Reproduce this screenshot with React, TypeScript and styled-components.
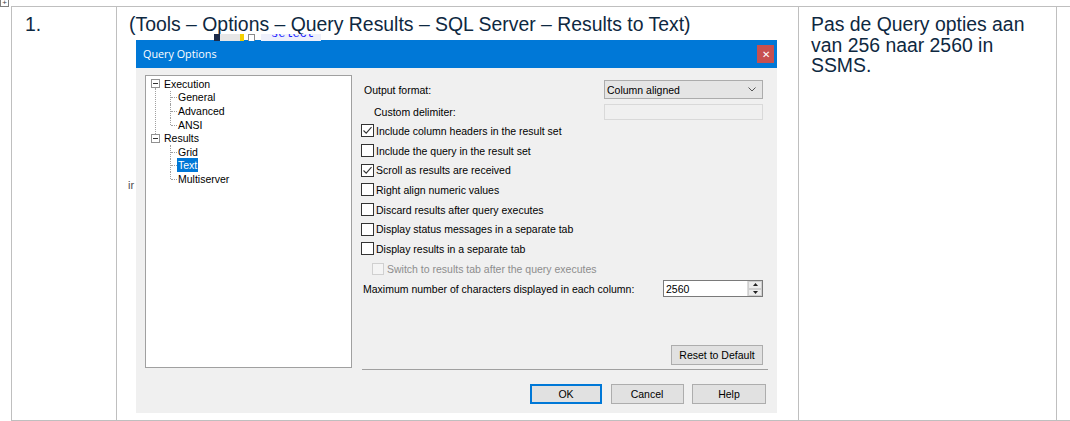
import React from 'react';
import styled, { createGlobalStyle } from 'styled-components';

const GlobalStyle = createGlobalStyle`
  html, body { margin: 0; padding: 0; background: #ffffff; }
  body { font-family: "Liberation Sans", Arial, sans-serif; }
  * { box-sizing: border-box; }
`;

const Page = styled.div`
  position: relative;
  width: 1070px;
  height: 421px;
  padding: 6px 0 0 11px;
  overflow: hidden;
`;

const MoveHandle = styled.div`
  position: absolute;
  left: 0;
  top: 0;
  width: 9px;
  height: 7px;
  border: 1px solid #7f7f7f;
  border-top: none;
  font-size: 8px;
  line-height: 5px;
  text-align: center;
  color: #404040;
`;

const Table = styled.div`
  display: grid;
  grid-template-columns: 105px 682px 259px;
  height: 415px;
  border-top: 1px solid #bfbfbf;
  border-bottom: 1px solid #bfbfbf;
`;

const Cell = styled.div<{ $last?: boolean }>`
  position: relative;
  border-left: 1px solid #bfbfbf;
  border-right: ${(p) => (p.$last ? '1px solid #bfbfbf' : 'none')};
  padding: 7px 12px 0 13px;
  color: #0e2841;
  font-size: 19.4px;
  line-height: 20.6px;
`;

const WideCell = styled(Cell)`
  padding: 7px 0 0 12px;
`;

const NoteCell = styled(Cell)`
  padding: 7px 18px 0 12px;
`;

const TitleLine = styled.div`
  line-height: 20px;
  white-space: nowrap;
`;

/* strip of the screenshot that peeks out above the dialog */
const CodeStrip = styled.div`
  position: absolute;
  left: 97px;
  top: 27px;
  height: 7px;
  display: flex;
  align-items: stretch;
  overflow: hidden;
`;

const StripPiece = styled.span<{ $w: number; $bg: string }>`
  display: block;
  width: ${(p) => p.$w}px;
  background: ${(p) => p.$bg};
`;

const StripBox = styled.span`
  display: block;
  width: 7px;
  margin: 0 2px 0 4px;
  border: 1px solid #8a8a8a;
  border-bottom: none;
  background: #fff;
`;

const StripCode = styled.span`
  display: block;
  width: 60px;
  margin-left: 4px;
  background: #eef0fb;
  color: #1a1aff;
  font-family: "Liberation Mono", monospace;
  font-size: 12px;
  line-height: 0px;
  padding-left: 10px;
`;

const GhostText = styled.span`
  position: absolute;
  left: 11px;
  top: 172px;
  font-size: 11px;
  line-height: 12px;
  color: #505050;
`;

const Dialog = styled.div`
  margin: 6px 0 0 7px;
  width: 641px;
  background: #f0f0f0;
  font-family: "Liberation Sans", Arial, sans-serif;
  font-size: 10.5px;
  line-height: 12px;
  color: #000;
`;

const TitleBar = styled.div`
  height: 28px;
  background: #0078d7;
  display: flex;
  align-items: center;
  justify-content: space-between;
  padding: 0 3px 0 7px;
  color: #ffffff;
  font-family: "Open Sans", "Noto Sans", sans-serif;
  font-size: 10.8px;
`;

const CloseButton = styled.div`
  width: 17px;
  height: 18px;
  background: #c75050;
  color: #fff;
  font-size: 10px;
  display: flex;
  align-items: center;
  justify-content: center;
`;

const Body = styled.div`
  padding: 7px 9px 9px 9px;
`;

const Main = styled.div`
  display: grid;
  grid-template-columns: 207px 408px;
  column-gap: 8px;
`;

const TreePanel = styled.div`
  height: 293px;
  background: #ffffff;
  border: 1px solid #a0a0a0;
  padding: 1px 0 0 0;
`;

const RootNode = styled.div<{ $hasNext?: boolean }>`
  position: relative;
  &::before {
    content: '';
    display: ${(p) => (p.$hasNext ? 'block' : 'none')};
    position: absolute;
    left: 9px;
    top: 11px;
    height: 100%;
    border-left: 1px dotted #a0a0a0;
  }
`;

const NodeRow = styled.div`
  height: 13.6px;
  display: flex;
  align-items: center;
  padding-left: 5px;
  white-space: nowrap;
`;

const Expander = styled.span`
  position: relative;
  width: 9px;
  height: 9px;
  margin-right: 3px;
  border: 1px solid #919191;
  background: #fff;
  z-index: 1;
  &::after {
    content: '';
    position: absolute;
    left: 1px;
    top: 3px;
    width: 5px;
    border-top: 1px solid #333;
  }
`;

const ChildRow = styled.div<{ $last?: boolean }>`
  position: relative;
  height: 13.6px;
  display: flex;
  align-items: center;
  padding-left: 31px;
  white-space: nowrap;
  &::before {
    content: '';
    position: absolute;
    left: 24px;
    top: 0;
    height: ${(p) => (p.$last ? '50%' : '100%')};
    border-left: 1px dotted #a0a0a0;
  }
  &::after {
    content: '';
    position: absolute;
    left: 25px;
    top: 50%;
    width: 6px;
    border-top: 1px dotted #a0a0a0;
  }
`;

const NodeLabel = styled.span<{ $selected?: boolean }>`
  padding: 1px 1px;
  background: ${(p) => (p.$selected ? '#0078d7' : 'transparent')};
  color: ${(p) => (p.$selected ? '#ffffff' : '#000000')};
`;

const Form = styled.div`
  height: 295px;
  display: flex;
  flex-direction: column;
`;

const FieldRow = styled.div<{ $h: number; $top: number; $indent: number }>`
  height: ${(p) => p.$h}px;
  margin-top: ${(p) => p.$top}px;
  padding: 0 5px 0 ${(p) => p.$indent}px;
  display: flex;
  align-items: center;
  justify-content: space-between;
  white-space: nowrap;
`;

const Select = styled.div`
  width: 159px;
  height: 19px;
  background: #e5e5e5;
  border: 1px solid #acacac;
  display: flex;
  align-items: center;
  justify-content: space-between;
  padding: 0 6px 0 2px;
`;

const TextInput = styled.div<{ $disabled?: boolean }>`
  width: ${(p) => (p.$disabled ? 159 : 100)}px;
  height: ${(p) => (p.$disabled ? 16 : 17)}px;
  background: ${(p) => (p.$disabled ? '#f0f0f0' : '#ffffff')};
  border: 1px solid ${(p) => (p.$disabled ? '#d9d9d9' : '#7a7a7a')};
  display: flex;
  align-items: center;
  justify-content: space-between;
  padding-left: 2px;
`;

const Spinner = styled.div`
  width: 15px;
  height: 15px;
  display: flex;
  flex-direction: column;
  border-left: 1px solid #dcdcdc;
`;

const SpinHalf = styled.div`
  flex: 1;
  display: flex;
  align-items: center;
  justify-content: center;
  background: #ececec;
  border: 1px solid #cfcfcf;
`;

const CheckList = styled.div`
  margin-top: 1px;
`;

const CheckRow = styled.div<{ $indent?: number; $disabled?: boolean }>`
  height: 19.7px;
  display: flex;
  align-items: center;
  padding-left: ${(p) => p.$indent ?? 1}px;
  color: ${(p) => (p.$disabled ? '#8d8d8d' : '#000')};
  white-space: nowrap;
`;

const Box = styled.span<{ $disabled?: boolean }>`
  width: ${(p) => (p.$disabled ? 12 : 13)}px;
  height: ${(p) => (p.$disabled ? 12 : 13)}px;
  margin-right: ${(p) => (p.$disabled ? 3 : 2)}px;
  background: ${(p) => (p.$disabled ? '#f4f4f4' : '#ffffff')};
  border: 1px solid ${(p) => (p.$disabled ? '#d0d0d0' : '#333333')};
  display: flex;
  align-items: center;
  justify-content: center;
`;

const Spacer = styled.div`
  flex: 1;
`;

const Button = styled.div<{ $w: number; $default?: boolean }>`
  width: ${(p) => p.$w}px;
  height: 20px;
  background: #e1e1e1;
  border: 1px solid ${(p) => (p.$default ? '#0078d7' : '#adadad')};
  box-shadow: ${(p) => (p.$default ? 'inset 0 0 0 1px #0078d7' : 'none')};
  display: flex;
  align-items: center;
  justify-content: center;
`;

const ResetRow = styled.div`
  display: flex;
  justify-content: flex-end;
  padding-right: 5px;
`;

const Separator = styled.div`
  margin: 4px 0 0 2px;
  border-top: 1px solid #a0a0a0;
  height: 1px;
`;

const ButtonBar = styled.div`
  margin-top: 14px;
  padding-right: 2px;
  display: flex;
  justify-content: flex-end;
  gap: 8.5px;
`;

const Check = ({ checked }: { checked?: boolean }) => (
  <Box>
    {checked && (
      <svg width="11" height="11" viewBox="0 0 11 11">
        <path d="M1.5 5.5 L4.2 8.2 L9.5 2.2" fill="none" stroke="#333" strokeWidth="1.1" />
      </svg>
    )}
  </Box>
);

const options: { label: string; checked?: boolean }[] = [
  { label: 'Include column headers in the result set', checked: true },
  { label: 'Include the query in the result set' },
  { label: 'Scroll as results are received', checked: true },
  { label: 'Right align numeric values' },
  { label: 'Discard results after query executes' },
  { label: 'Display status messages in a separate tab' },
  { label: 'Display results in a separate tab' },
];

export default function App() {
  return (
    <>
      <GlobalStyle />
      <Page>
        <MoveHandle>+</MoveHandle>
        <Table>
          <Cell>1.</Cell>
          <WideCell>
            <TitleLine>(Tools – Options – Query Results – SQL Server – Results to Text)</TitleLine>
            <CodeStrip>
              <StripPiece $w={6} $bg="#1c2a48" />
              <StripPiece $w={20} $bg="#e6e6e6" />
              <StripPiece $w={4} $bg="#f5d000" />
              <StripBox />
              <StripCode>select</StripCode>
            </CodeStrip>
            <GhostText>ir</GhostText>
            <Dialog>
              <TitleBar>
                <span>Query Options</span>
                <CloseButton>✕</CloseButton>
              </TitleBar>
              <Body>
                <Main>
                  <TreePanel>
                    <RootNode $hasNext>
                      <NodeRow>
                        <Expander />
                        <NodeLabel>Execution</NodeLabel>
                      </NodeRow>
                      <ChildRow><NodeLabel>General</NodeLabel></ChildRow>
                      <ChildRow><NodeLabel>Advanced</NodeLabel></ChildRow>
                      <ChildRow $last><NodeLabel>ANSI</NodeLabel></ChildRow>
                    </RootNode>
                    <RootNode>
                      <NodeRow>
                        <Expander />
                        <NodeLabel>Results</NodeLabel>
                      </NodeRow>
                      <ChildRow><NodeLabel>Grid</NodeLabel></ChildRow>
                      <ChildRow><NodeLabel $selected>Text</NodeLabel></ChildRow>
                      <ChildRow $last><NodeLabel>Multiserver</NodeLabel></ChildRow>
                    </RootNode>
                  </TreePanel>

                  <Form>
                    <FieldRow $h={19} $top={5} $indent={4}>
                      <span>Output format:</span>
                      <Select>
                        <span>Column aligned</span>
                        <svg width="8" height="5" viewBox="0 0 8 5">
                          <path d="M0.5 0.5 L4 4 L7.5 0.5" fill="none" stroke="#555" strokeWidth="1" />
                        </svg>
                      </Select>
                    </FieldRow>
                    <FieldRow $h={16} $top={5} $indent={14}>
                      <span>Custom delimiter:</span>
                      <TextInput $disabled />
                    </FieldRow>
                    <CheckList>
                      {options.map((o) => (
                        <CheckRow key={o.label}>
                          <Check checked={o.checked} />
                          {o.label}
                        </CheckRow>
                      ))}
                      <CheckRow $indent={12} $disabled>
                        <Box $disabled />
                        Switch to results tab after the query executes
                      </CheckRow>
                    </CheckList>
                    <FieldRow $h={20} $top={0} $indent={3}>
                      <span>Maximum number of characters displayed in each column:</span>
                      <TextInput>
                        <span>2560</span>
                        <Spinner>
                          <SpinHalf>
                            <svg width="5" height="3" viewBox="0 0 5 3"><path d="M0 3 L2.5 0 L5 3Z" fill="#222" /></svg>
                          </SpinHalf>
                          <SpinHalf>
                            <svg width="5" height="3" viewBox="0 0 5 3"><path d="M0 0 L2.5 3 L5 0Z" fill="#222" /></svg>
                          </SpinHalf>
                        </Spinner>
                      </TextInput>
                    </FieldRow>
                    <Spacer />
                    <ResetRow>
                      <Button $w={92}>Reset to Default</Button>
                    </ResetRow>
                    <Separator />
                  </Form>
                </Main>
                <ButtonBar>
                  <Button $w={72} $default>OK</Button>
                  <Button $w={73}>Cancel</Button>
                  <Button $w={74}>Help</Button>
                </ButtonBar>
              </Body>
            </Dialog>
          </WideCell>
          <NoteCell $last>Pas de Query opties aan van 256 naar 2560 in SSMS.</NoteCell>
        </Table>
      </Page>
    </>
  );
}
